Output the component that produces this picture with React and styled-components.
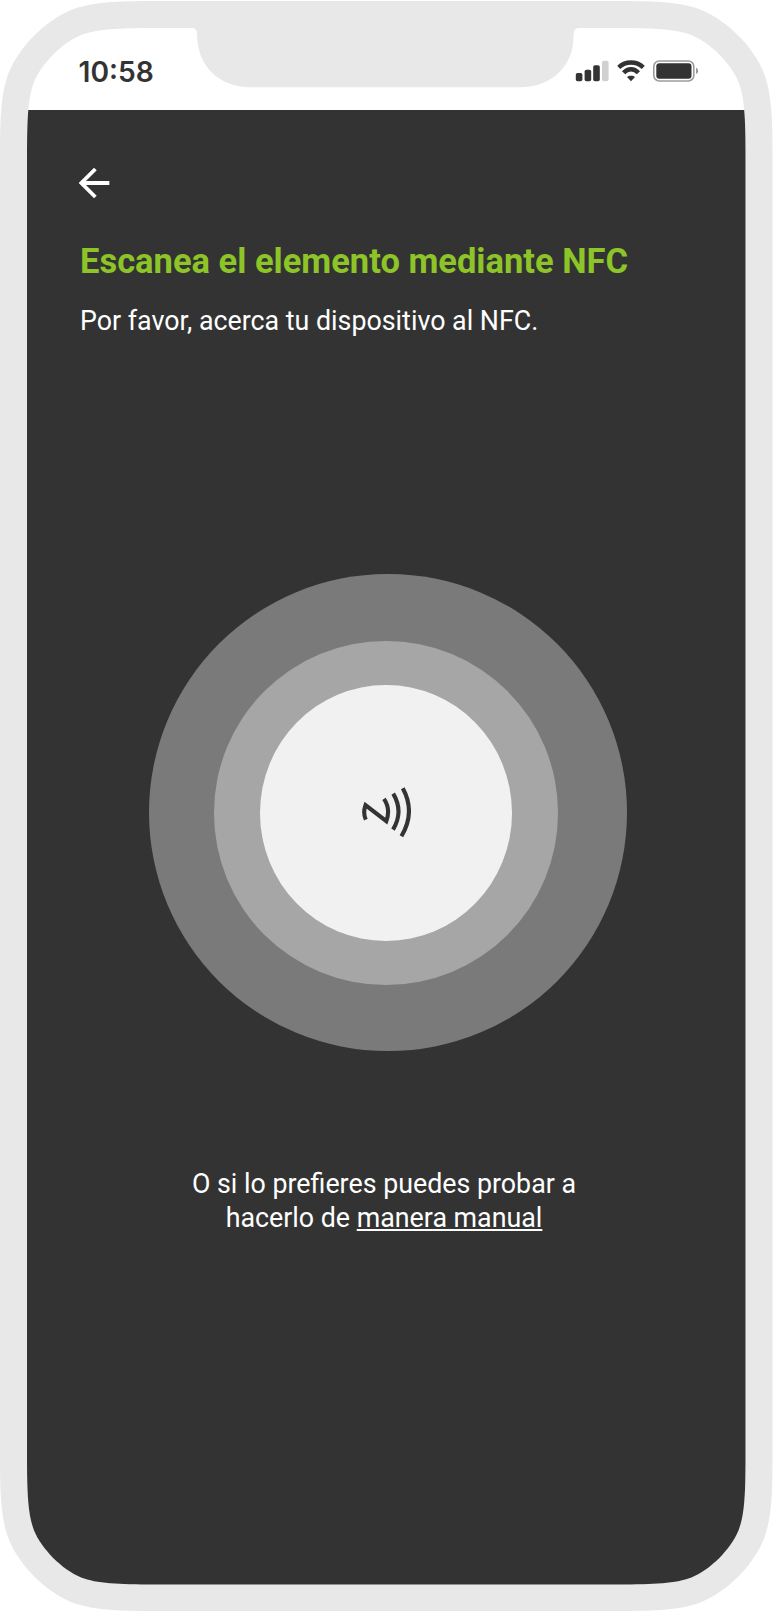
import React from "react";
import styled, { createGlobalStyle } from "styled-components";
import { MdArrowBack } from "react-icons/md";

const GlobalStyle = createGlobalStyle`
  * {
    box-sizing: border-box;
  }
  body {
    margin: 0;
    background: #fff;
    font-family: Roboto, sans-serif;
  }
`;

// smooth phone corners, plain border-radius is too round
const outerShape =
  "M0 156C0 116 1 93 9 72C20 46 45 21 71 10C92 2 115 1 155 1H617.5C657.5 1 680.5 2 701.5 10C727.5 21 752.5 46 763.5 72C771.5 93 772.5 116 772.5 156V1456C772.5 1496 771.5 1519 763.5 1540C752.5 1566 727.5 1591 701.5 1602C680.5 1610 657.5 1611 617.5 1611H155C115 1611 92 1610 71 1602C45 1591 20 1566 9 1540C1 1519 0 1496 0 1456Z";
const innerShape =
  "M0 128C0 90 1 70 7 54C15 35 35 15 54 7C70 1 90 0 128 0H590.5C628.5 0 648.5 1 664.5 7C683.5 15 703.5 35 711.5 54C717.5 70 718.5 90 718.5 128V1428.4C718.5 1466.4 717.5 1486.4 711.5 1502.4C703.5 1521.4 683.5 1541.4 664.5 1549.4C648.5 1555.4 628.5 1556.4 590.5 1556.4H128C90 1556.4 70 1555.4 54 1549.4C35 1541.4 15 1521.4 7 1502.4C1 1486.4 0 1466.4 0 1428.4Z";

const Phone = styled.div`
  width: 773px;
  height: 1611px;
  padding: 28px 27px 0;
  background: #e8e8e8;
  clip-path: path("${outerShape}");
`;

const Screen = styled.div`
  position: relative;
  display: flex;
  flex-direction: column;
  height: 1557px;
  background: #fff;
  clip-path: path("${innerShape}");
`;

const StatusBar = styled.header`
  display: flex;
  justify-content: space-between;
  align-items: flex-start;
  height: 82px;
  padding: 26px 46.7px 0 51.6px;
`;

const Notch = styled.svg`
  position: absolute;
  top: 0;
  left: 165px;
`;

const Time = styled.span`
  padding-top: 1px;
  color: #333;
  font-family: Inter, sans-serif;
  font-size: 28.2px;
  font-weight: 600;
  line-height: 34px;
`;

const StatusIcons = styled.div`
  display: flex;
  align-items: flex-start;
  gap: 8px;
  padding-top: 6px;
`;

const Content = styled.main`
  display: flex;
  flex: 1;
  flex-direction: column;
  align-items: flex-start;
  padding: 50px 52px 0 53px;
  background: #333;
`;

const BackButton = styled.button`
  display: flex;
  margin: 0 0 0 -8.8px;
  padding: 0;
  border: 0;
  background: none;
  color: #fff;
  font-size: 46px;
`;

const Title = styled.h1`
  margin: 35px 0 0;
  color: #8dc428;
  font-size: 34.5px;
  font-weight: 700;
  line-height: 40px;
  white-space: nowrap;
`;

const Subtitle = styled.p`
  margin: 24px 0 0;
  color: #fff;
  font-size: 26.8px;
  line-height: 32px;
  white-space: nowrap;
`;

const OuterRing = styled.div`
  width: 477.4px;
  height: 477.4px;
  margin: 237px 0 0 69.3px;
  padding: 67px 0 0 65px;
  border-radius: 50%;
  background: #7a7a7a;
`;

const MiddleRing = styled.div`
  width: 343.7px;
  height: 343.7px;
  padding: 44px 0 0 46px;
  border-radius: 50%;
  background: #a6a6a6;
`;

const Core = styled.div`
  display: flex;
  justify-content: center;
  align-items: center;
  width: 251.3px;
  height: 255.7px;
  border-radius: 50%;
  background: #f1f1f1;
`;

const Help = styled.p`
  align-self: center;
  margin: 116px 0 0 -6px;
  color: #fff;
  font-size: 26.8px;
  line-height: 34px;
  text-align: center;
`;

const Link = styled.a`
  color: #fff;
  text-decoration: underline;
  text-decoration-thickness: 1.6px;
  text-underline-offset: 2px;
  text-decoration-skip-ink: none;
`;

function Signal() {
  return (
    <svg width="34" height="22" viewBox="0 0 34 22" fill="#333">
      <rect x="0.8" y="13" width="6.6" height="8.2" rx="1.8" />
      <rect x="9.6" y="9.7" width="6.6" height="11.5" rx="1.8" />
      <rect x="18.2" y="5.2" width="6.6" height="16" rx="1.8" />
      <rect x="27" y="0.8" width="6.6" height="20.4" rx="1.8" fill="#d0d0d0" />
    </svg>
  );
}

function Wifi() {
  return (
    <svg width="28" height="22" viewBox="0 0 28 22">
      <g fill="none" stroke="#333" strokeWidth="4.4">
        <path d="M1.7 7.4C8.6 0.9 19.4 0.9 26.3 7.4" />
        <path d="M6.6 12.7C10.9 8 17.1 8 21.4 12.7" />
      </g>
      <path d="M10 17C12 15.3 16 15.3 18 17L14 21.2Z" fill="#333" />
    </svg>
  );
}

function Battery() {
  return (
    <svg width="46" height="22" viewBox="0 0 46 22">
      <rect x="0.8" y="1" width="40" height="20" rx="5.4" fill="none" stroke="#9c9c9c" strokeWidth="1.6" />
      <rect x="3.3" y="3.3" width="35.2" height="15.5" rx="3" fill="#333" />
      <path d="M43 7.7C45.8 8.8 45.8 13 43 14.1Z" fill="#999" />
    </svg>
  );
}

function NfcIcon() {
  return (
    <svg width="50" height="52" viewBox="361 786.8 50 52" fill="none" stroke="#333" strokeWidth="4.1">
      <path d="M365.8 819.5C363.4 814.3 363.6 810.3 365.5 804.9L386.3 821C389 813.8 389 806.1 384 798.6" />
      <path d="M393.2 793.4C400 804.8 400 817.8 393 829.4" />
      <path d="M402.8 788.1C411.4 804.1 411.2 819.8 401.4 836.1" />
    </svg>
  );
}

function App() {
  return (
    <>
      <GlobalStyle />
      <Phone>
        <Screen>
          <StatusBar>
            <Time>10:58</Time>
            <StatusIcons>
              <Signal />
              <Wifi />
              <Battery />
            </StatusIcons>
          </StatusBar>
          <Notch width="388" height="60" viewBox="192 28 388 60">
            <path
              d="M192 28C195.5 28 197 30.5 197 34C197 66 219 87.3 251 87.3H519.5C551.5 87.3 573.5 66 573.5 37C573.5 31 575 28 579 28Z"
              fill="#e8e8e8"
            />
          </Notch>
          <Content>
            <BackButton aria-label="Volver">
              <MdArrowBack />
            </BackButton>
            <Title>Escanea el elemento mediante NFC</Title>
            <Subtitle>Por favor, acerca tu dispositivo al NFC.</Subtitle>
            <OuterRing>
              <MiddleRing>
                <Core>
                  <NfcIcon />
                </Core>
              </MiddleRing>
            </OuterRing>
            <Help>
              O si lo prefieres puedes probar a
              <br />
              hacerlo de <Link>manera manual</Link>
            </Help>
          </Content>
        </Screen>
      </Phone>
    </>
  );
}

export default App;
